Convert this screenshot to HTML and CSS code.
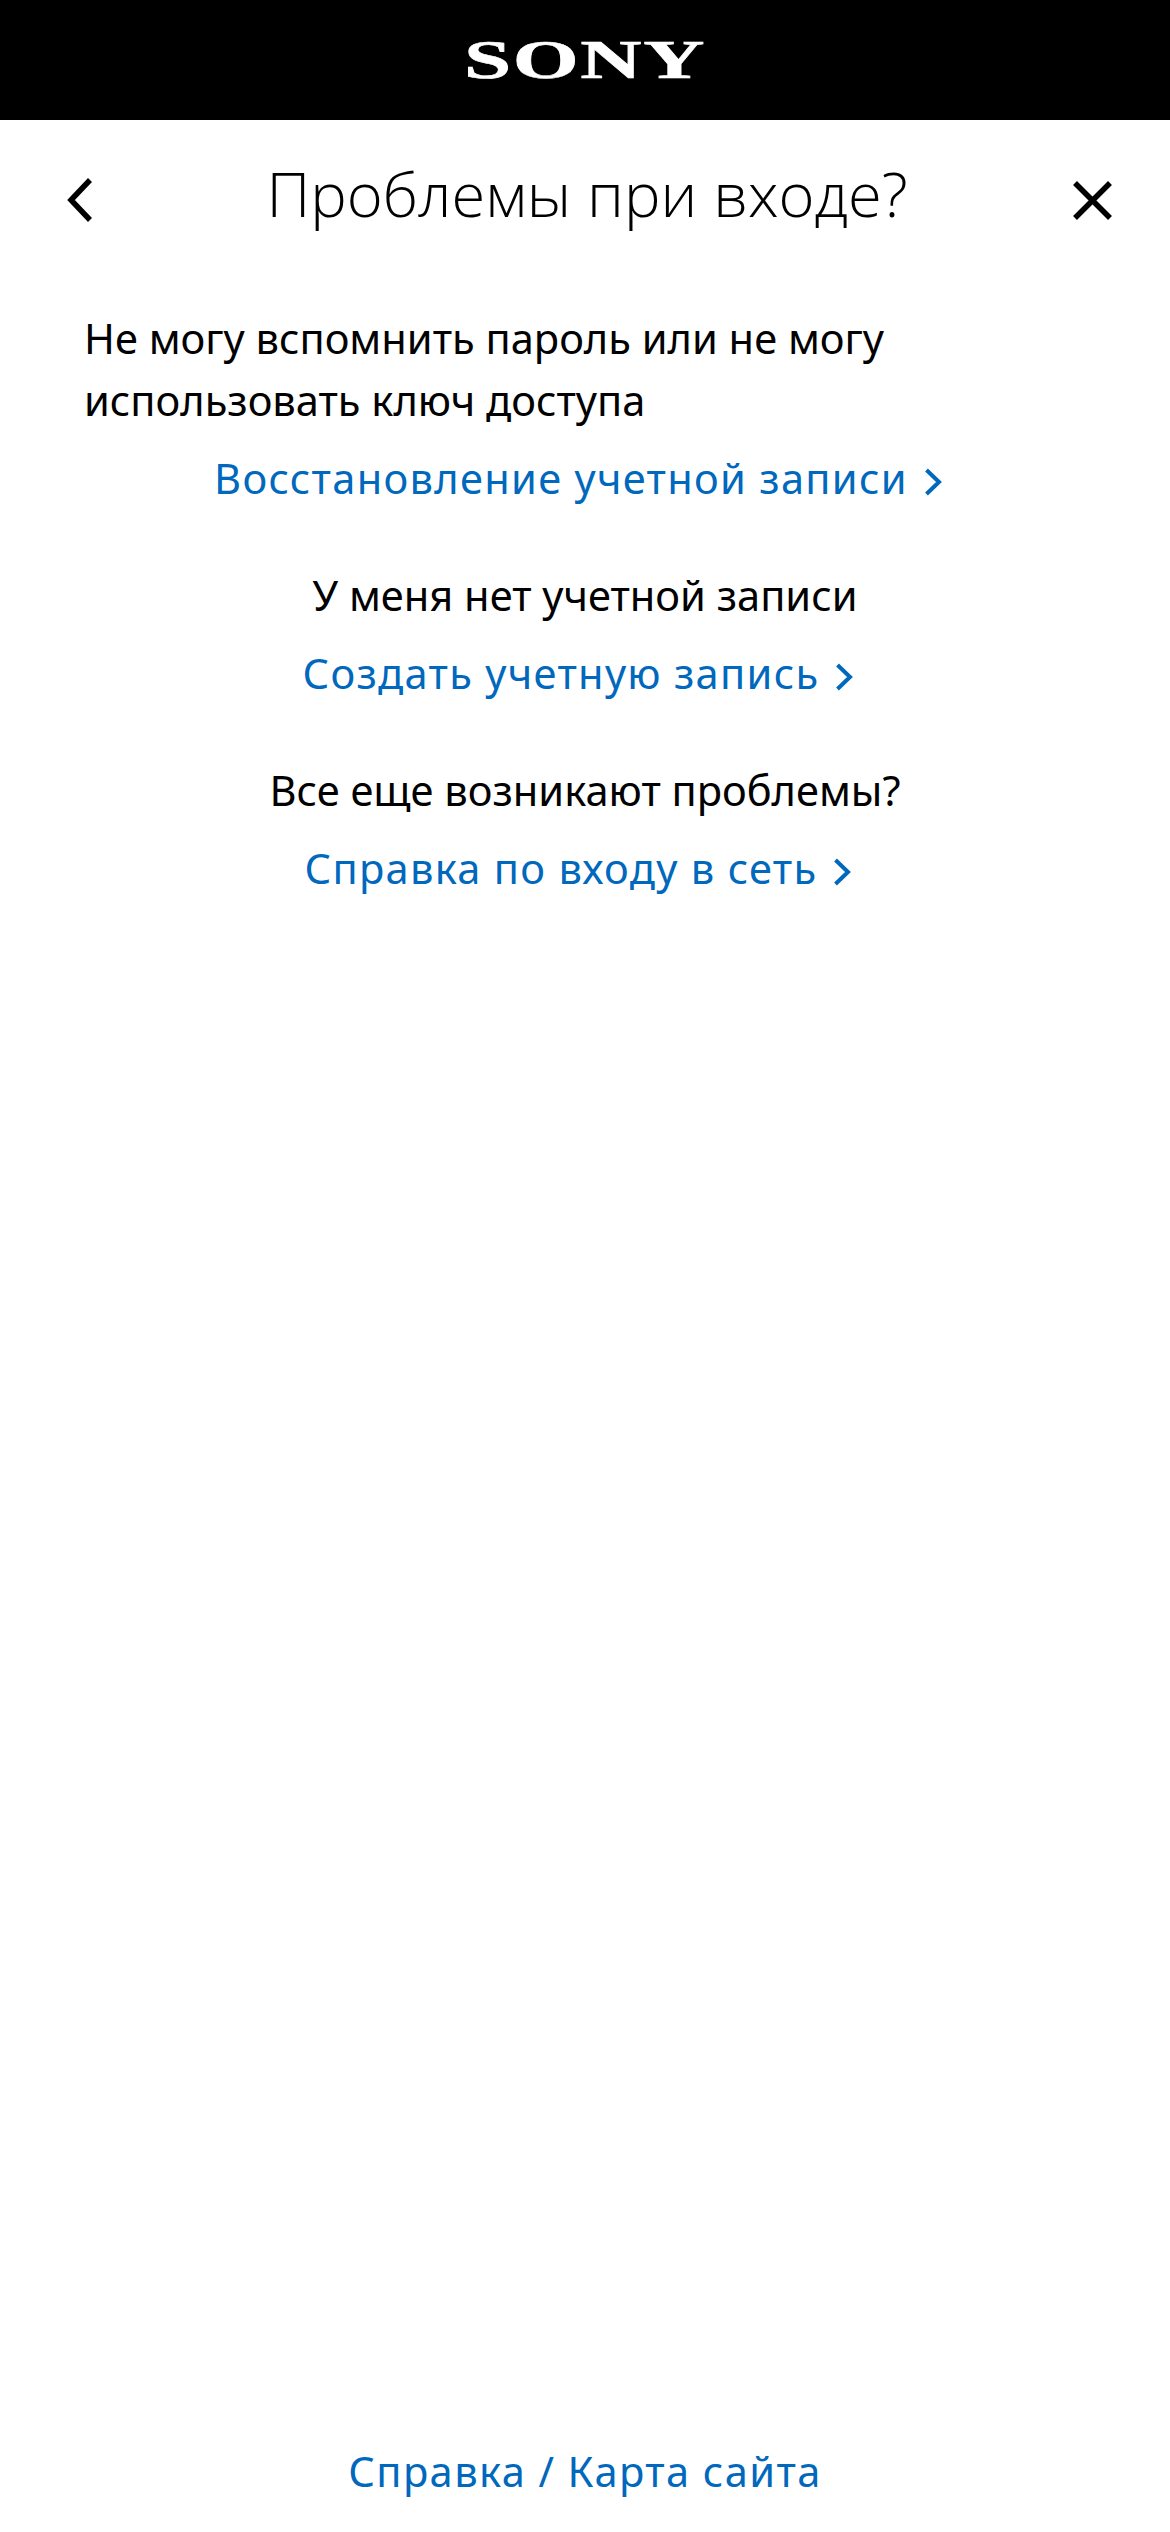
FILE: index.html
```html
<!DOCTYPE html>
<html lang="ru">
<head>
    <meta charset="UTF-8">
    <meta name="viewport" content="width=device-width, initial-scale=1.0">
    <title>Проблемы при входе?</title>
    <link rel="stylesheet" href="styles.css">
</head>
<body>
    <header class="topbar">
        <span class="logo">SONY</span>
    </header>

    <div class="titlebar">
        <a class="icon-btn back" href="#" aria-label="Назад">
            <svg width="26" height="44" viewBox="0 0 26 44"><path d="M23 2 L4 22 L23 42" fill="none" stroke="#000" stroke-width="5.5"/></svg>
        </a>
        <h1>Проблемы при входе?</h1>
        <a class="icon-btn close" href="#" aria-label="Закрыть">
            <svg width="39" height="39" viewBox="0 0 39 39"><path d="M2 2 L37 37 M37 2 L2 37" fill="none" stroke="#000" stroke-width="5.5"/></svg>
        </a>
    </div>

    <main class="content">
        <section class="block">
            <p class="left">Не могу вспомнить пароль или не могу использовать ключ доступа</p>
            <a class="link" href="#">Восстановление учетной записи
                <svg class="chevron" width="18" height="28" viewBox="0 0 18 28"><path d="M2.5 2 L15 14 L2.5 26" fill="none" stroke="#0068bd" stroke-width="4"/></svg>
            </a>
        </section>
        <section class="block">
            <p>У меня нет учетной записи</p>
            <a class="link" href="#">Создать учетную запись
                <svg class="chevron" width="18" height="28" viewBox="0 0 18 28"><path d="M2.5 2 L15 14 L2.5 26" fill="none" stroke="#0068bd" stroke-width="4"/></svg>
            </a>
        </section>
        <section class="block">
            <p>Все еще возникают проблемы?</p>
            <a class="link" href="#">Справка по входу в сеть
                <svg class="chevron" width="18" height="28" viewBox="0 0 18 28"><path d="M2.5 2 L15 14 L2.5 26" fill="none" stroke="#0068bd" stroke-width="4"/></svg>
            </a>
        </section>
    </main>

    <footer class="footer">
        <a href="#">Справка</a> / <a href="#">Карта сайта</a>
    </footer>
</body>
</html>
```

FILE: styles.css
```css
html, body {
    height: 100%;
}

body {
    display: flex;
    flex-direction: column;
    margin: 0;
    background-color: #fff;
    color: #000;
    font-family: 'Noto Sans', 'Open Sans', sans-serif;
}

a {
    color: #0068bd;
    text-decoration: none;
}

.topbar {
    display: flex;
    justify-content: center;
    align-items: center;
    height: 120px;
    background-color: #000;
}

.logo {
    color: #fff;
    font-family: 'Liberation Serif', serif;
    font-weight: bold;
    font-size: 54px;
    line-height: 1;
    letter-spacing: 1px;
    -webkit-text-stroke: 0.6px #fff;
    transform: scaleX(1.57);
}

.titlebar {
    display: grid;
    grid-template-columns: 1fr auto 1fr;
    align-items: center;
    padding: 30px 58px 0 62px;
}

.icon-btn {
    display: flex;
    margin-top: 14px;
}

.back {
    margin-left: 5px;
    justify-self: start;
}

.close {
    justify-self: end;
}

.titlebar h1 {
    margin: 0;
    font-size: 61.4px;
    line-height: 86px;
    font-weight: 300;
    font-family: 'Open Sans', 'Noto Sans', sans-serif;
}

.content {
    flex: 1;
    padding: 71px 84px 0;
}

.block {
    display: flex;
    flex-direction: column;
    align-items: center;
    margin-bottom: 55px;
}

.block p {
    margin: 0 0 16px;
    font-size: 41.6px;
    line-height: 62px;
    text-align: center;
}

.block p.left {
    align-self: stretch;
    text-align: left;
}

.link {
    display: flex;
    align-items: center;
    gap: 16px;
    margin-right: 14px;
    font-size: 41.6px;
    line-height: 62px;
    letter-spacing: 1.3px;
}

.chevron {
    margin-top: 8px;
}

.footer {
    padding-bottom: 30px;
    color: #0068bd;
    font-size: 41.6px;
    line-height: 62px;
    letter-spacing: 1.4px;
    text-align: center;
}
```
